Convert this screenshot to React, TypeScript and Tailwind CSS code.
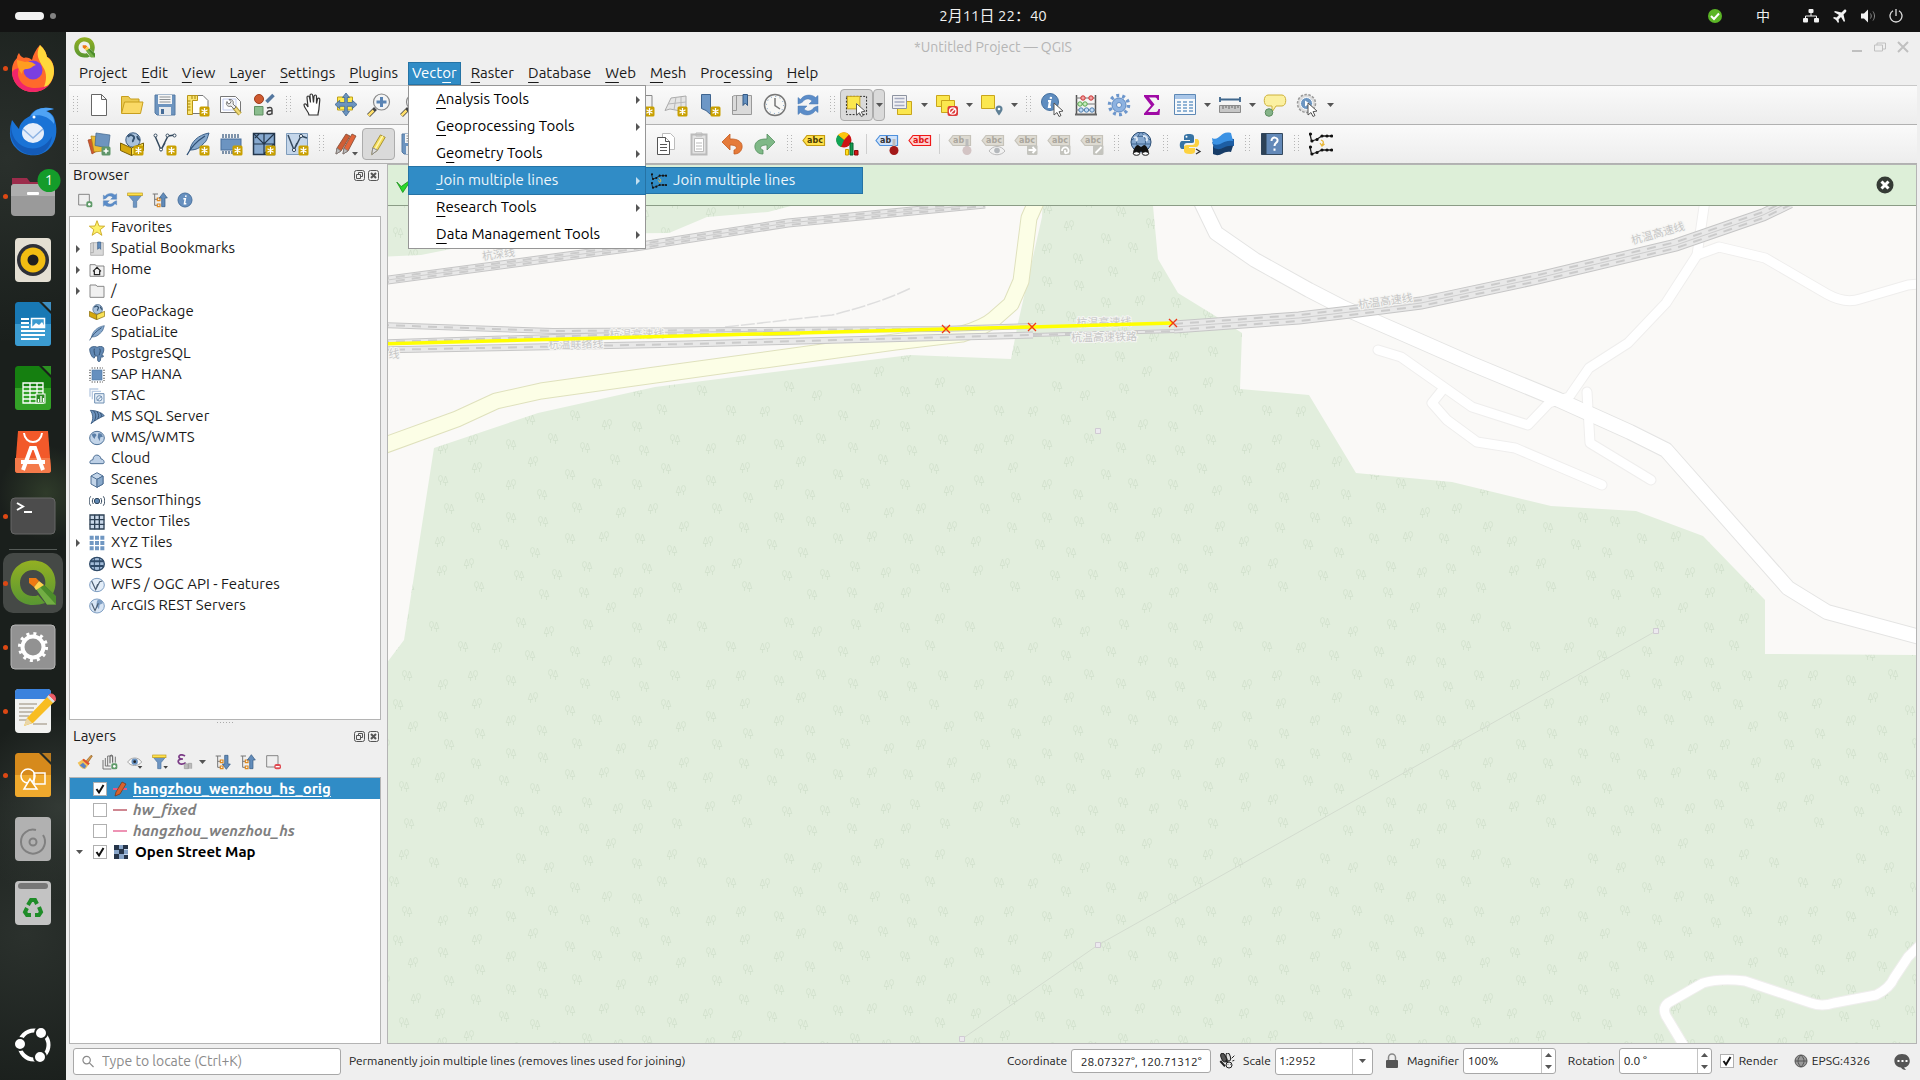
import type { ReactNode } from "react";

type IconProps = { size?: number; children: ReactNode };

function Icon({ size = 24, children }: IconProps) {
  return (
    <svg width={size} height={size} viewBox="0 0 24 24" fill="none" className="shrink-0" aria-hidden="true">
      {children}
    </svg>
  );
}

// Small yellow "new" badge shared by the creation tools.
const badge = (
  <g>
    <rect x="13.5" y="13.5" width="10" height="10" rx="1.5" fill="#c9a000" />
    <path d="M18.5 15v7M15.5 16.8l6 3.4M21.5 16.8l-6 3.4" stroke="#fff" strokeWidth="1.3" />
  </g>
);
const cursor = <path d="M12 10v12l3-2.5 2 4 2-1-2-3.8 4-.7z" fill="#fff" stroke="#555" strokeWidth="1" />;

const icons = {
  page: <path d="M4.5 1.5h10l5 5v16h-15zM14.5 1.5v5h5" fill="#fff" stroke="#666" />,
  folder: (
    <g stroke="#c79f1e">
      <path d="M1.5 20V3.5h7l2 2.5h8.5v4" fill="#eccb52" />
      <path d="M1.5 20.5l3-11.5h18.5l-2.5 11.5z" fill="#fad966" />
    </g>
  ),
  save: (
    <g>
      <path d="M2 2h20v20H4l-2-2z" fill="#6d94bf" stroke="#567aa3" />
      <rect x="5" y="2" width="14" height="9" fill="#f5f5f5" />
      <path d="M6.5 4h11M6.5 6.5h11M6.5 9h11" stroke="#8b9094" />
      <rect x="6" y="14" width="12" height="8" fill="#e6e9ec" />
      <rect x="8" y="16" width="3" height="5" fill="#456c98" />
    </g>
  ),
  layout: (
    <g>
      <path d="M6 2.5h11l5 5v13H6z" fill="#fff" stroke="#777" />
      <path d="M1.5 2.5h10v5h-5v14h-5z" fill="#fae470" stroke="#b89518" />
      <path d="M1.5 8h3M1.5 11h3M1.5 14h3M1.5 17h3M6 3v3M9 3v3" stroke="#a5840c" />
      {badge}
    </g>
  ),
  layoutManager: (
    <g>
      <path d="M1.5 3.5h15l5 5v11h-20z" fill="#fff" stroke="#777" />
      <path d="M4 6h13v11H4z" fill="#fdfdff" stroke="#c3cdf0" />
      <path d="M15 14l6 7" stroke="#b09a3c" strokeWidth="4.5" />
      <path d="M15 14l6 7" stroke="#f1da78" strokeWidth="2.5" />
      <path d="M8 8.5c-2 3 1 6 4 4.5l3 3 2-2-3-3c1-3-1-5-4-4.5l2 2-1 2-2 .3z" fill="#eee" stroke="#777" />
    </g>
  ),
  styles: (
    <g>
      <circle cx="7" cy="6" r="4.5" fill="#cf5a30" stroke="#9e3d1b" />
      <path d="M14.5 9l7-7" stroke="#54779f" strokeWidth="3.5" />
      <path d="M2.5 13.5h8.5v8.5H2.5z" fill="#8bbd8e" stroke="#5e8f61" />
      <path d="M15 15c4-1.5 5 0 5 2v4.5M20 17.5c-6 0-6 4-3 4 2 0 3-1 3-2" stroke="#444" strokeWidth="1.5" />
    </g>
  ),
  hand: (
    <path
      d="M8 22c0-3-5-7-5-10 0-1.5 2-1.5 3 .5l1 1.5L6 4.5c0-2 2-2 2.5 0l1 5-.5-7c0-2 2.5-2 2.7 0l.8 7 .5-6c.3-2 2.5-2 2.5 0v7l1-4.5c.5-1.5 2.5-1 2.3 1L18 15c0 3-1 4-1 7z"
      fill="#fff"
      stroke="#333"
      strokeWidth="1.2"
    />
  ),
  pan: (
    <g>
      <path d="M3.5 4h15v13h-15z" fill="#ffe94e" stroke="#bfa11c" />
      <path
        d="M12 0l3.5 4.5h-2.2v5h5V7.3L23 11.5l-4.7 4.2v-2.4h-5v5h2.2L12 23l-3.5-4.7h2.2v-5h-5v2.4L1 11.5l4.7-4.2v2.2h5v-5H8.5z"
        fill="#6b94c0"
        stroke="#3f6690"
        strokeWidth=".8"
      />
    </g>
  ),
  zoomIn: (
    <g>
      <path d="M8.5 15.5l-7 7" stroke="#444" strokeWidth="4" />
      <path d="M6.5 17.5l-5 5" stroke="#ffdf6b" strokeWidth="2.5" />
      <circle cx="14.5" cy="9" r="8" fill="#f3f4f5" stroke="#888" strokeWidth="1.2" />
      <path d="M14.5 4v10M9.5 9h10" stroke="#5a84b4" strokeWidth="3" />
    </g>
  ),
  zoomOut: (
    <g>
      <path d="M8.5 15.5l-7 7" stroke="#444" strokeWidth="4" />
      <path d="M6.5 17.5l-5 5" stroke="#ffdf6b" strokeWidth="2.5" />
      <circle cx="14.5" cy="9" r="8" fill="#f3f4f5" stroke="#888" strokeWidth="1.2" />
      <path d="M9.5 9h10" stroke="#5a84b4" strokeWidth="3" />
    </g>
  ),
  newView: (
    <g>
      <path d="M2 2.5h19v17H2z" fill="#f2f2f2" stroke="#888" />
      {badge}
    </g>
  ),
  mesh: (
    <g>
      <path d="M1 17.5L7 5l15-2v13l-8 1.5-8-1.5z" fill="#e5e5e5" stroke="#aaa" />
      <path d="M4 11l9-1 9-1M12 4l-2 13M17 4v12" stroke="#b8b8b8" />
      {badge}
    </g>
  ),
  newBookmark: (
    <g>
      <path d="M4.5 1.5h9v20l-4.5-4-4.5-2z" fill="#6d97c6" stroke="#3e648f" />
      {badge}
    </g>
  ),
  bookmarks: (
    <g>
      <path d="M2.5 3v18.5h19V2.5h-16c-2 0-3 .5-3 2" fill="#dadada" stroke="#999" />
      <path d="M6.5 2.5v15h-4" stroke="#999" />
      <path d="M13 1.5h4.5v11l-2.2-2.5-2.3 2.5z" fill="#638fbf" stroke="#345a86" />
    </g>
  ),
  clock: (
    <g>
      <circle cx="12" cy="12" r="10.5" fill="#f8f8f6" stroke="#777" strokeWidth="1.5" />
      <path d="M12 5v7.5l5 3.5" stroke="#777" strokeWidth="1.5" />
      <circle cx="12" cy="12" r="8.5" stroke="#6b94c0" strokeDasharray="1 3.45" />
    </g>
  ),
  refresh: (
    <g fill="#5b8cc8" stroke="#4a78b0" strokeWidth=".5">
      <path d="M2 11V4.5l2.5 2C8 1 16 1 19.5 4.5L22 2.5v8.5h-9l3-3c-3-3-7-2.5-9 .5-.8 1-3 2-5 2.5z" />
      <path d="M22 13v6.5l-2.5-2C16 23 8 23 4.5 19.5L2 21.5V13h9l-3 3c3 3 7 2.5 9-.5.8-1 3-2 5-2.5z" />
    </g>
  ),
  select: (
    <g>
      <path d="M1.5 2.5h21v19h-21z" stroke="#222" strokeDasharray="2 1.5" />
      <path d="M2.5 2.5h13v13h-13z" fill="#fbe74e" stroke="#c9a51b" />
      {cursor}
    </g>
  ),
  selectForm: (
    <g>
      <path d="M7.5 8.5h14v13h-14z" fill="#fbe74e" stroke="#c9a51b" />
      <path d="M2.5 2.5h14v13h-14z" fill="#f1f1f4" stroke="#8d93a0" />
      <path d="M4.5 5.5h10M4.5 9h10M4.5 12.5h10" stroke="#a5abc0" strokeWidth="1.5" />
    </g>
  ),
  deselect: (
    <g>
      <path d="M1.5 2.5h13v11h-13z" fill="#fbe74e" stroke="#c9a51b" />
      <path d="M6.5 7.5h13v12h-13z" fill="#fbe74e" stroke="#c9a51b" />
      <rect x="12.5" y="13" width="10.5" height="10" rx="2" fill="#dd3b3b" />
      <circle cx="17.7" cy="18" r="3.2" stroke="#fff" strokeWidth="1.3" />
      <path d="M15.5 20.2l4.5-4.5" stroke="#fff" strokeWidth="1.3" />
    </g>
  ),
  selectLocation: (
    <g>
      <path d="M1.5 2.5h13v13h-13z" fill="#fbe74e" stroke="#c9a51b" />
      <path d="M19 22.5c-3-4-3.5-5-3.5-6.5a3.5 3.5 0 017 0c0 1.5-.5 2.5-3.5 6.5z" fill="#5f8096" />
      <circle cx="19" cy="16" r="1.3" fill="#fff" />
    </g>
  ),
  identify: (
    <g>
      <circle cx="9" cy="9" r="8.5" fill="#5f8dc0" stroke="#44709f" />
      <path d="M10 3.8l-.3 2M7 8h2l-1 6h2" stroke="#fff" strokeWidth="2.2" />
      <g transform="translate(1 0)">{cursor}</g>
    </g>
  ),
  abacus: (
    <g>
      <path d="M2.5 22V2M21.5 22V2" stroke="#555" strokeWidth="1.5" />
      <path d="M2 5h20M2 11h20M2 17h20" stroke="#777" />
      <path d="M1 21.5h22" stroke="#666" strokeWidth="2" />
      <circle cx="9" cy="5" r="2.2" fill="#f3a0a0" stroke="#c33" />
      <circle cx="17" cy="5" r="2.2" fill="#f3a0a0" stroke="#c33" />
      <circle cx="6" cy="11" r="2.2" fill="#c6efbe" stroke="#5ca650" />
      <circle cx="11" cy="11" r="2.2" fill="#c6efbe" stroke="#5ca650" />
      <circle cx="7" cy="17" r="2.2" fill="#c0daf5" stroke="#5080b0" />
      <circle cx="12.5" cy="17" r="2.2" fill="#c0daf5" stroke="#5080b0" />
      <circle cx="18" cy="17" r="2.2" fill="#c0daf5" stroke="#5080b0" />
    </g>
  ),
  gear: (
    <g>
      <circle cx="12" cy="12" r="9.5" stroke="#6c96cc" strokeWidth="3.5" strokeDasharray="2.9 3.07" />
      <circle cx="12" cy="12" r="7" fill="#8db2e0" stroke="#5f8cc5" />
      <circle cx="12" cy="12" r="2.5" fill="#f4f4f4" stroke="#5f8cc5" />
    </g>
  ),
  sigma: <path d="M4 2h15v5h-1.5c-.5-2-1.5-2.5-3.5-2.500H9l5.5 7L8 19h7c2 0 3-.5 3.500-3H20l-.5 6H4v-1.500l7-8L4 3.500z" fill="#9f0aa5" />,
  table: (
    <g>
      <path d="M1.5 1.5h21v20h-21z" fill="#f7f9fb" stroke="#5d88b5" />
      <path d="M2 2h20v4H2z" fill="#a9c6e8" />
      <path d="M4 9h4M4 12h4M4 15h4M4 18h4M10 9h4M10 12h4M10 15h4M10 18h4M16 9h4M16 12h4M16 15h4M16 18h4" stroke="#6f9cc9" strokeWidth="1.5" />
    </g>
  ),
  ruler: (
    <g>
      <path d="M2 6.5h20M2 4v5M22 4v5" stroke="#3f678d" strokeWidth="1.8" />
      <path d="M1.5 12.5h21v7h-21z" fill="#c6c6c6" stroke="#8a8a8a" />
      <path d="M5 13v3M8 13v2M11 13v3M14 13v2M17 13v3M20 13v2" stroke="#666" />
    </g>
  ),
  tip: (
    <g>
      <path d="M5 2h14c5 0 5 11 0 11h-6l-4 6v-6H5c-5 0-5-11 0-11z" fill="#fbf0a0" stroke="#cdb13a" />
      <circle cx="6" cy="19.5" r="3.8" fill="#85b388" stroke="#5c8c60" />
    </g>
  ),
  actionRun: (
    <g>
      <circle cx="10.5" cy="10.5" r="9" fill="#dcdcdc" stroke="#999" strokeWidth="1.5" strokeDasharray="2.5 1.5" />
      <circle cx="10.5" cy="10.5" r="6" fill="#6c96c2" stroke="#fff" />
      <path d="M9 7.5l4.5 3-4.5 3z" fill="#fff" />
      {cursor}
    </g>
  ),
  dataSource: (
    <g>
      <path d="M1 8l9-2 3 11-8 5z" fill="#cf5a30" stroke="#9e3d1b" strokeWidth=".7" />
      <path d="M4 4l12 1v14l-9 1z" fill="#edbd35" stroke="#a98014" strokeWidth=".7" />
      <path d="M9 1l14 2-1.5 13L8 13.5z" fill="#6d94bf" stroke="#41658d" strokeWidth=".7" />
      <rect x="14.5" y="14.5" width="9" height="9" rx="1.5" fill="#60966a" />
      <path d="M19 16.5v5M16.5 19h5" stroke="#fff" strokeWidth="1.6" />
    </g>
  ),
  geopackage: (
    <g>
      <circle cx="13" cy="8" r="7.2" fill="#a8c1db" stroke="#3c5d82" />
      <path d="M8 5c2-3 5-2 6 0s-2 3-1 5M17 4c1 2 1 4 3 4" stroke="#34516f" strokeWidth="2" />
      <path d="M.5 11l11 5v7.500l-11-5z" fill="#d5a80d" stroke="#7b6006" />
      <path d="M11.5 16l12-5v7.500l-12 5z" fill="#f9e257" stroke="#7b6006" />
    </g>
  ),
  shapefile: (
    <g stroke="#34495e" strokeWidth="1.5">
      <path d="M2 4l6 14 7-14 7-1M8 18l4-7" />
      <circle cx="2.5" cy="3.5" r="1.5" fill="#fff" strokeWidth="1" />
      <circle cx="8" cy="17.5" r="1.5" fill="#fff" strokeWidth="1" />
      <circle cx="14.5" cy="3.5" r="1.5" fill="#fff" strokeWidth="1" />
      <circle cx="21.5" cy="3.5" r="1.5" fill="#fff" strokeWidth="1" />
    </g>
  ),
  feather: (
    <g>
      <path d="M4 18C5 10 12 3 23 1c-2 6-2 8-6 11-3 4-7 6-13 6z" fill="#86a8cc" stroke="#3b5f88" />
      <path d="M1 23C5 15 11 9 19 4" stroke="#2e4f75" strokeWidth="1.3" />
    </g>
  ),
  chip: (
    <g>
      <rect x="2" y="7" width="20" height="11" fill="#6c94c1" stroke="#486f9b" />
      <path d="M4 6V2M7 6V2M10 6V2M13 6V2M16 6V2M19 6V2M4 22v-3M7 22v-3M10 22v-3M13 22v-3" stroke="#3f5f82" strokeWidth="1.3" />
    </g>
  ),
  virtualLayer: (
    <g>
      <path d="M1.5 1.5h21v21h-21z" fill="#87a9cf" stroke="#23364b" strokeWidth="1.5" />
      <path d="M12 1.5v21M1.5 12h21M1.5 1.5L12 12l10-10M3 6l4-4M12 22l10-10" stroke="#23364b" strokeWidth="1.2" />
    </g>
  ),
  meshLayer: (
    <g>
      <path d="M1.5 1.5h21v21h-21z" fill="#c4d6ea" stroke="#7f9cbb" />
      <path d="M3 3l6 15 7-14 6 2M9 18l3-7" stroke="#34495e" strokeWidth="1.5" />
      <circle cx="9" cy="18" r="1.6" fill="#fff" stroke="#34495e" />
      <circle cx="16" cy="4" r="1.6" fill="#fff" stroke="#34495e" />
    </g>
  ),
  pencils: (
    <g>
      <path d="M2 22l1-6L12 2l4 2-9 15z" fill="#cf5d35" stroke="#7d4a34" strokeWidth=".8" />
      <path d="M9 22l1-6 8-14 4 2-8 15z" fill="#e2653a" stroke="#7d4a34" strokeWidth=".8" />
      <path d="M2 22l1-6 4 3zM9 22l1-6 4 3z" fill="#bbb" stroke="#777" strokeWidth=".8" />
      <path d="M18 20h6l-3 3.5z" fill="#555" />
    </g>
  ),
  pencil: (
    <g>
      <path d="M5 22.5l1-7L14 2l5 2.5L11 18z" fill="#f4dd5a" stroke="#a48f35" />
      <path d="M8.5 16.5l8-13.5" stroke="#fff6b5" strokeWidth="1.5" />
      <path d="M5 22.5l1-7 5 2.5z" fill="#ddd" stroke="#888" />
    </g>
  ),
  copy: (
    <g fill="#fff" stroke="#777">
      <path d="M8.5 1.5h8l4 4v12h-12z" stroke="#bbb" />
      <path d="M3.5 5.5h8l4 4v13h-12z" stroke="#555" />
      <path d="M11.5 5.5v4h4M6 12.5h7M6 15.5h7M6 18.5h7" stroke="#555" />
    </g>
  ),
  paste: (
    <g stroke="#bbb">
      <path d="M4.5 2.5h15v20h-15z" fill="#e3e3e3" strokeWidth="2" />
      <path d="M7.5 6.5h9v13h-9z" fill="#fff" />
      <path d="M9 1h6v3H9zM9 11h6M9 14h6M9 17h6" />
    </g>
  ),
  undo: <path d="M2 10l8-8v5c9-.5 13 4 12 9-1 4-4 6-8 6v-4c3-.5 4.500-5-4-5v5z" fill="#e57b3a" stroke="#c45c20" strokeWidth=".8" />,
  redo: <path d="M22 10l-8-8v5C5 6.5 1 11 2 16c1 4 4 6 8 6v-4c-3-.5-4.500-5 4-5v5z" fill="#7fb887" stroke="#579060" strokeWidth=".8" />,
  diagrams: (
    <g>
      <circle cx="9" cy="8" r="7.5" fill="#cc1414" />
      <path d="M9 8L3 3a7.500 7.500 0 0111-.5z" fill="#fbc70b" />
      <path d="M9 8L3 3a7.500 7.500 0 003 12z" fill="#10a555" />
      <path d="M10.5 17.5h3V23h-3z" fill="#ffe01b" stroke="#c99c00" />
      <path d="M15 11h3v12h-3z" fill="#119b50" stroke="#07632f" />
      <path d="M19.5 18.5h3.5V23h-3.5z" fill="#d21414" stroke="#8a0808" />
    </g>
  ),
  metasearch: (
    <g>
      <circle cx="12" cy="10" r="10" fill="#86a8cf" stroke="#28496f" />
      <path d="M3 8c5-5 13-5 18 0M2 12h20M12 0c-6 6-6 14 0 20M12 0c6 6 6 14 0 20" stroke="#3f658f" />
      <path d="M5 6c3-2 4 1 2 3M14 4c4 0 5 3 3 5" stroke="#dce8f5" strokeWidth="2" />
      <path d="M4 22c0-5 3-9 5-9l3 2 3-2c2 0 5 4 5 9h-6l-2-3-2 3z" fill="#111" />
      <ellipse cx="7.500" cy="21.500" rx="3.200" ry="1.800" fill="#fff" stroke="#111" />
      <ellipse cx="16.500" cy="21.500" rx="3.200" ry="1.800" fill="#fff" stroke="#111" />
    </g>
  ),
  python: (
    <g>
      <path d="M11 2c-4 0-5 1-5 3v3h6v1H4c-3 0-3 8 0 8h2v-3c0-2 1-3 3-3h5c2 0 2-1 2-2V5c0-2-1-3-5-3z" fill="#3773a5" />
      <path d="M12 22c4 0 5-1 5-3v-3h-6v-1h7c4 0 4-8 1-8h-2v3c0 2-1 3-3 3H9c-2 0-3 1-3 2v4c0 2 2 3 6 3z" fill="#fdd240" />
      <circle cx="8.5" cy="4.8" r="1" fill="#fff" />
      <path d="M18 17l4 2.5-4 2.5" stroke="#333" strokeWidth="1.3" />
    </g>
  ),
  waves: (
    <g>
      <path d="M2 14c7 3 9-6 21-3l-3 9c-8-2-10 6-18 2z" fill="#173c67" />
      <path d="M1 10c8 4 10-6 22-3v7c-10-2-12 6-20 2z" fill="#1d5ea4" />
      <path d="M1 6c8 4 8-8 19-5l2 8c-10-2-12 6-20 3z" fill="#3b92e4" />
    </g>
  ),
  help: (
    <g>
      <path d="M1.5 1.5h21v21h-21z" fill="#6389b8" stroke="#34495e" />
      <path d="M1.5 1.5h5v21h-5z" fill="#2d4257" />
      <path d="M11.5 9c0-5 7-4 6 0-.5 2-3 2-3 5M14.5 16.5v2.200" stroke="#fff" strokeWidth="2" />
    </g>
  ),
  join: (
    <g>
      <g stroke="#222" strokeWidth="1.3">
        <path d="M1 2l1.5 7 5-1.5L13 4h10" />
        <path d="M1 15l1.5 7 5-1.500L13 18h10" />
      </g>
      <g fill="#111">
        <circle cx="1.5" cy="2" r="1.6" /><circle cx="3" cy="9" r="1.6" /><circle cx="8" cy="7.5" r="1.6" />
        <circle cx="13" cy="4" r="1.6" /><circle cx="18" cy="4" r="1.6" /><circle cx="22.5" cy="4" r="1.6" />
        <circle cx="1.5" cy="15" r="1.6" /><circle cx="3" cy="22" r="1.6" /><circle cx="8" cy="20.5" r="1.6" />
        <circle cx="13" cy="18" r="1.6" /><circle cx="18" cy="18" r="1.6" /><circle cx="22.5" cy="18" r="1.6" />
      </g>
      <path d="M12 8c3 1 3 3 1 5M11 11l2 3 2.5-2" stroke="#e8b73a" strokeWidth="1.3" />
    </g>
  ),
  star: <path d="M12 1l3 8 8.5.3-6.7 5.200 2.500 8.500-7.300-5-7.300 5 2.500-8.500L.5 9.300 9 9z" fill="#fdf06a" stroke="#c9a51b" strokeWidth="1.3" />,
  home: (
    <g>
      <path d="M1.5 21.5V4h8l1.5 2h11.5v15.500z" fill="#f1f1f1" stroke="#777" strokeWidth="1.3" />
      <path d="M6 14l6-6 6 6M8 13v6h8v-6" stroke="#222" strokeWidth="1.8" />
    </g>
  ),
  dir: <path d="M1.5 21.5V3h9l1.5 2h10.500v16.500z" fill="#f0f0f0" stroke="#888" strokeWidth="1.5" />,
  elephant: (
    <g>
      <path d="M3 2c4-2 8-1 9 0 3-2 9-2 10 1 1 4-1 8-3 11l3 1c-1 2-3 2-4 1l-1 6c-1 2-4 2-4-1v-6H9l-1 3C4 18 1 9 1 5c0-1 1-2 2-3z" fill="#6289b4" stroke="#3c5d82" strokeWidth="1.3" />
      <path d="M8 4c-1 3 0 7 1 10M16 4c2 3 0 7-1 10" stroke="#334f6e" strokeWidth="1.5" />
    </g>
  ),
  hana: (
    <g>
      <rect x="4.5" y="4.5" width="15" height="15" fill="#6690bf" stroke="#5079a6" />
      <path d="M4 1.500h17M4 22.500h17M1.500 4v17M22.500 4v17" stroke="#222" strokeWidth="1.800" strokeDasharray="1.500 2.500" />
    </g>
  ),
  stac: (
    <g>
      <path d="M1.5 13V1.5H14M5 17V5h13" stroke="#b9cbe2" strokeWidth="2" />
      <path d="M8.5 8.5h14v14h-14z" fill="#e8f0f8" stroke="#6f8fb2" strokeWidth="1.5" />
      <circle cx="15.5" cy="15.5" r="4" stroke="#6f8fb2" strokeWidth="1.5" />
      <path d="M12 19l7-7" stroke="#6f8fb2" strokeWidth="1.5" />
    </g>
  ),
  mssql: (
    <g>
      <path d="M2 2c8 0 17 3 21 8-6 3-13 6-20 12 4-7 3-14-1-20z" fill="#6b91bc" stroke="#3c5d82" strokeWidth="1.3" />
      <path d="M7 3c4 5 4 9 1 15M12 4c3 4 3 7 1 11M17 6c2 3 2 4 1 6" stroke="#2d4866" strokeWidth="1.3" />
    </g>
  ),
  globe: (
    <g>
      <ellipse cx="12" cy="12" rx="11" ry="10" fill="#c3d5e9" stroke="#4e7197" strokeWidth="1.5" />
      <path d="M4 7c3-3 6-2 7 0s-3 3-2 7l-3-3zM14 5c4-1 6 2 7 5l-4 1-1 6-3-6z" fill="#5a7fa8" />
    </g>
  ),
  cloud: <path d="M3 19c-3 0-2-6 3-6 0-9 11-9 12-1 5 0 6 7 3 7z" fill="#bdd0e6" stroke="#4e6f94" strokeWidth="1.5" />,
  cube: (
    <g fill="#c3d5e9" stroke="#4e6f94" strokeWidth="1.5">
      <path d="M3 6l9-5 9 5v12l-9 5-9-5z" />
      <path d="M3 6l9 5 9-5M12 11v12" fill="none" />
      <path d="M12 11l9-5v12l-9 5z" fill="#89a9cb" />
    </g>
  ),
  sensor: (
    <g stroke="#34495e" strokeWidth="1.5">
      <circle cx="12" cy="12" r="4" fill="#5d86b2" />
      <path d="M6.5 7.5c-2 3-2 6 0 9M17.5 7.5c2 3 2 6 0 9M2.500 5c-3 4-3 10 0 14M21.500 5c3 4 3 10 0 14" />
    </g>
  ),
  vectorTiles: (
    <g>
      <path d="M1.5 1.5h21v21h-21z" fill="#c9d7e8" stroke="#2d4054" strokeWidth="2" />
      <path d="M8.5 1v22M15.5 1v22M1 8.5h22M1 15.5h22" stroke="#2d4054" strokeWidth="2" />
    </g>
  ),
  xyz: (
    <path
      d="M1 1h6v6H1zM9 1h6v6H9zM17 1h6v6h-6zM1 9h6v6H1zM9 9h6v6H9zM17 9h6v6h-6zM1 17h6v6H1zM9 17h6v6H9zM17 17h6v6h-6z"
      fill="#7097c2"
    />
  ),
  wcs: (
    <g>
      <ellipse cx="12" cy="12" rx="11" ry="10" fill="#a3bcd9" stroke="#2f4a68" strokeWidth="2" />
      <path d="M2 8h20M2 15h20" stroke="#2f4a68" strokeWidth="3" />
      <path d="M8 3v18M16 3v18" stroke="#2f4a68" strokeWidth="1.5" />
    </g>
  ),
  wfs: (
    <g>
      <ellipse cx="12" cy="12" rx="11" ry="10" fill="#e3edf8" stroke="#7d9dc2" strokeWidth="1.5" />
      <path d="M4 6l6 13 6-12 4-1M10 19l3-8" stroke="#4c5e72" strokeWidth="1.8" />
    </g>
  ),
  arcgis: (
    <g>
      <ellipse cx="12" cy="12" rx="11" ry="10.5" fill="#d8e5f4" stroke="#7d9dc2" strokeWidth="1.5" />
      <path d="M12 4c4-3 8 0 9 4l-5 2-1 7-4-5z" fill="#7d9dc2" />
      <path d="M4 8l5 11 5-11" stroke="#4c5e72" strokeWidth="1.8" />
    </g>
  ),
  addSelected: (
    <g>
      <path d="M2.5 3.5h16v16h-16z" stroke="#777" strokeWidth="1.3" />
      <rect x="14" y="14" width="9" height="9" rx="2.5" fill="#5f9b69" />
      <circle cx="18.5" cy="18.5" r="2" fill="#fff" />
    </g>
  ),
  filter: (
    <g>
      <path d="M2 5h20l-7.5 9v9h-5v-9z" fill="#6e96c3" stroke="#4b73a0" />
      <rect x="1" y="1.5" width="22" height="4" fill="#ffe14c" stroke="#bd9a1c" />
    </g>
  ),
  collapse: (
    <g>
      <path d="M1 3h8M4 3v17h4M4 11h4" stroke="#777" strokeWidth="1.5" />
      <path d="M8 9h4v4H8zM8 18h4v4H8z" stroke="#e08a1e" strokeWidth="1.8" />
      <path d="M17 1l6 8h-3.5v13h-5V9H11z" fill="#628cbb" stroke="#34587f" />
    </g>
  ),
  expand: (
    <g>
      <path d="M1 3h8M4 3v17h4M4 11h4" stroke="#777" strokeWidth="1.5" />
      <path d="M8 9h4v4H8zM8 18h4v4H8z" stroke="#e08a1e" strokeWidth="1.8" />
      <path d="M17 23l6-8h-3.5V2h-5v13H11z" fill="#628cbb" stroke="#34587f" />
    </g>
  ),
  info: (
    <g>
      <circle cx="12" cy="12" r="10.5" fill="#6790bf" stroke="#4a729f" strokeWidth="1.5" />
      <path d="M13.5 5l-.5 2.5M9.5 10h3l-1.3 7.5H14" stroke="#fff" strokeWidth="2.3" />
    </g>
  ),
  brush: (
    <g>
      <path d="M14 10l7-8 2 1-6 9z" fill="#dc9a47" stroke="#8a5c20" />
      <path d="M1 13l9-6 9 7-6 8c-2 1-3-1-5 0-1-2-3-1-4-4z" fill="#f2c259" />
      <path d="M10 7l9 7-2 3-9-8z" fill="#dd4f34" />
      <path d="M4 17l5-4 5 5-3 4z" fill="#5b83c4" />
    </g>
  ),
  group: (
    <g>
      <path d="M1.5 9v13.5H14M5 6v12M8.5 3v15M8.5 3h8M20 4v9M5 18h8" stroke="#777" strokeWidth="1.5" />
      <path d="M12 14V4c0-3 4-3 4 0v9" stroke="#555" strokeWidth="1.5" />
      <rect x="14" y="14" width="9" height="9" rx="2.5" fill="#5f9b69" />
      <circle cx="18.5" cy="18.5" r="2" fill="#fff" />
    </g>
  ),
  eye: (
    <g>
      <path d="M1 12c5-8 16-8 21 0-5 7-16 7-21 0z" fill="#fafafa" stroke="#999" strokeWidth="1.3" />
      <circle cx="11.5" cy="11.5" r="4.8" fill="#6790bf" />
      <circle cx="11.5" cy="11.5" r="2" fill="#222" />
      <path d="M16 18h7l-3.5 4z" fill="#444" />
    </g>
  ),
  filterMenu: (
    <g>
      <path d="M2 5h18l-6.5 8v9h-5v-9z" fill="#6e96c3" stroke="#4b73a0" />
      <rect x="1" y="1.5" width="20" height="4" fill="#ffe14c" stroke="#bd9a1c" />
      <path d="M17 18h7l-3.5 4z" fill="#444" />
    </g>
  ),
  epsilon: (
    <g>
      <path d="M12 3C8 0 2 1 3 5c.5 2 3 2.500 6 2.500C4 7.500 1 9 2 12c1 4 7 4 11 1" stroke="#7a3b86" strokeWidth="2.5" />
      <path d="M11 22v-6c0-2 6-2 6 0v6zM17 22v-8h5v8" fill="#bbb" stroke="#999" />
    </g>
  ),
  removeLayer: (
    <g>
      <path d="M2.5 2.5h17v17h-17z" stroke="#777" strokeWidth="1.3" />
      <rect x="14" y="15" width="10" height="8" rx="3" fill="#df4b52" />
      <path d="M16 19h6" stroke="#fff" strokeWidth="2" />
    </g>
  ),
};

type Glyph = keyof typeof icons;

// Label tag; the text inside is real svg text.
function TagIcon({ tone, text = "abc", extra }: { tone: "yellow" | "red" | "blue" | "gray"; text?: string; extra?: ReactNode }) {
  const colors = {
    yellow: ["#ffe14c", "#c39b12", "#4a3b00"],
    red: ["#ffd0d0", "#f01818", "#e01010"],
    blue: ["#cfe2fa", "#4e90dc", "#333"],
    gray: ["#dedbd2", "#c6c3ba", "#aaa69d"],
  }[tone];
  return (
    <svg width="24" height="24" viewBox="0 0 24 24" fill="none" aria-hidden="true">
      <path d="M1 8.5L5 3.5h17.5v10H5z" fill={colors[0]} stroke={colors[1]} strokeWidth="1.2" />
      <text x="5" y="11" fontSize="8" fontWeight="bold" fill={colors[2]} className="font-['DejaVu_Sans']">
        {text}
      </text>
      {extra}
    </svg>
  );
}

const pin = (color: string) => (
  <g>
    <path d="M19 7v9" stroke="#bbb" strokeWidth="3" />
    <circle cx="19" cy="18.5" r="4.5" fill={color} />
  </g>
);
const grayBox = (d: string) => (
  <g>
    <rect x="13" y="13" width="10.5" height="10" rx="1.5" fill="#c4c4be" />
    <path d={d} stroke="#fff" strokeWidth="1.8" />
  </g>
);

type Tool = { label: string; icon?: Glyph; node?: ReactNode; badge?: boolean; arrow?: boolean; checked?: boolean; disabled?: boolean } | "grip" | "line" | "gap";

const mainTools: Tool[] = [
  { label: "New Project", icon: "page" },
  { label: "Open Project", icon: "folder" },
  { label: "Save Project", icon: "save" },
  { label: "New Print Layout", icon: "layout" },
  { label: "Layout Manager", icon: "layoutManager" },
  { label: "Style Manager", icon: "styles" },
  "grip",
  { label: "Pan Map", icon: "hand" },
  { label: "Pan Map to Selection", icon: "pan" },
  { label: "Zoom In", icon: "zoomIn" },
  { label: "Zoom Out", icon: "zoomOut" },
  { label: "Zoom Full", icon: "zoomIn" },
  { label: "Zoom to Selection", icon: "zoomIn" },
  { label: "Zoom to Layer", icon: "zoomIn" },
  { label: "Zoom to Native Resolution", icon: "zoomIn" },
  { label: "Zoom Last", icon: "zoomOut" },
  { label: "Zoom Next", icon: "zoomOut" },
  { label: "New Map View", icon: "newView" },
  { label: "New 3D Map View", icon: "mesh" },
  { label: "New Spatial Bookmark", icon: "newBookmark" },
  { label: "Show Spatial Bookmarks", icon: "bookmarks" },
  { label: "Temporal Controller", icon: "clock" },
  { label: "Refresh", icon: "refresh" },
  "grip",
  { label: "Select Features", icon: "select", arrow: true, checked: true },
  { label: "Select by Value", icon: "selectForm", arrow: true },
  { label: "Deselect Features", icon: "deselect", arrow: true },
  { label: "Select by Location", icon: "selectLocation", arrow: true },
  "grip",
  { label: "Identify Features", icon: "identify" },
  { label: "Field Calculator", icon: "abacus" },
  { label: "Processing Toolbox", icon: "gear" },
  { label: "Statistical Summary", icon: "sigma" },
  { label: "Attribute Table", icon: "table", arrow: true },
  { label: "Measure Line", icon: "ruler", arrow: true },
  { label: "Map Tips", icon: "tip" },
  { label: "Run Feature Action", icon: "actionRun", arrow: true },
];

const editTools: Tool[] = [
  { label: "Data Source Manager", icon: "dataSource" },
  { label: "New GeoPackage Layer", icon: "geopackage", badge: true },
  { label: "New Shapefile Layer", icon: "shapefile", badge: true },
  { label: "New SpatiaLite Layer", icon: "feather", badge: true },
  { label: "New Scratch Layer", icon: "chip", badge: true },
  { label: "New Virtual Layer", icon: "virtualLayer", badge: true },
  { label: "New Mesh Layer", icon: "meshLayer", badge: true },
  "grip",
  { label: "Current Edits", icon: "pencils" },
  { label: "Toggle Editing", icon: "pencil", checked: true },
  { label: "Save Layer Edits", icon: "save", disabled: true },
  { label: "Add Line Feature", icon: "shapefile" },
  { label: "Vertex Tool", icon: "join" },
  { label: "Modify Attributes", icon: "table" },
  { label: "Delete Selected", icon: "page" },
  { label: "Cut Features", icon: "page" },
  { label: "Move Feature", icon: "page" },
  "gap",
  { label: "Copy Features", icon: "copy" },
  { label: "Paste Features", icon: "paste" },
  { label: "Undo", icon: "undo" },
  { label: "Redo", icon: "redo" },
  "grip",
  { label: "Layer Labeling", node: <TagIcon tone="yellow" /> },
  { label: "Layer Diagrams", icon: "diagrams" },
  "line",
  { label: "Pinned Labels", node: <TagIcon tone="blue" text="ab" extra={pin("#a31818")} /> },
  { label: "Unplaced Labels", node: <TagIcon tone="red" /> },
  "line",
  { label: "Pin Labels", node: <TagIcon tone="gray" text="ab" extra={pin("#d3c4c4")} /> },
  {
    label: "Show Labels",
    node: (
      <TagIcon
        tone="gray"
        extra={
          <g>
            <path d="M8 19c4-6 12-6 16 0-4 5-12 5-16 0z" fill="#f1f1f1" stroke="#bbb" />
            <circle cx="16" cy="18.5" r="2.8" fill="#b4b8bc" />
          </g>
        }
      />
    ),
  },
  { label: "Move Label", node: <TagIcon tone="gray" extra={grayBox("M14.5 18h7M18.5 15l3 3-3 3")} /> },
  { label: "Rotate Label", node: <TagIcon tone="gray" extra={grayBox("M15 19a3.3 3.3 0 116 1.5l-3 1M18 18v3.5")} /> },
  { label: "Change Label", node: <TagIcon tone="gray" extra={grayBox("M15.5 21l6-6")} /> },
  "grip",
  { label: "MetaSearch", icon: "metasearch" },
  "grip",
  { label: "Python Console", icon: "python" },
  { label: "Wave Plugin", icon: "waves" },
  "grip",
  { label: "Help Contents", icon: "help" },
  "grip",
  { label: "Join multiple lines", icon: "join" },
];

function Toolbar({ tools, label }: { tools: Tool[]; label: string }) {
  return (
    <div role="toolbar" aria-label={label} className="flex h-[39px] items-center overflow-hidden border-b border-[#b1b1b1] bg-linear-to-b from-[#fafafa] to-[#ededed]">
      <Grip first />
      {tools.map((tool, i) => {
        if (tool === "grip") return <Grip key={i} />;
        if (tool === "line") return <span key={i} className="mx-[3px] h-5 w-px shrink-0 bg-[#cfcfcf]" />;
        if (tool === "gap") return <span key={i} className="w-[23px] shrink-0" />;
        return (
          <span key={i} className="flex shrink-0">
            <button
              type="button"
              aria-label={tool.label}
              disabled={tool.disabled}
              className={`flex h-8 w-[33px] items-center justify-center ${tool.checked ? "rounded border border-[#acacac] bg-[#dadada]" : ""}`}
            >
              {tool.node ?? (
                <Icon size={tool.checked ? 23 : 24}>
                  {icons[tool.icon!]}
                  {tool.badge && badge}
                </Icon>
              )}
            </button>
            {tool.arrow && (
              <button
                type="button"
                aria-label={`${tool.label} options`}
                className={`flex h-8 w-3 items-center justify-center ${tool.checked ? "rounded border border-[#acacac] bg-[#dadada]" : ""}`}
              >
                <DownArrow />
              </button>
            )}
          </span>
        );
      })}
    </div>
  );
}

function DownArrow() {
  return (
    <svg width="7" height="4" viewBox="0 0 7 4" className="shrink-0" aria-hidden="true">
      <path d="M0 0h7L3.5 4z" fill="#555" />
    </svg>
  );
}

function RightArrow({ color = "#555" }: { color?: string }) {
  return (
    <svg width="4" height="8" viewBox="0 0 4 8" className="shrink-0" aria-hidden="true">
      <path d="M0 0l4 4-4 4z" fill={color} />
    </svg>
  );
}

function Grip({ first }: { first?: boolean }) {
  return (
    <span className={`flex shrink-0 justify-center ${first ? "w-[13px]" : "w-4"}`}>
      <svg width="5" height="18" viewBox="0 0 5 18" aria-hidden="true">
        <path d="M.5 0v18M4.5 0v18" stroke="#b5b5b5" strokeDasharray="1 2" />
      </svg>
    </span>
  );
}

const menus: [string, number][] = [
  ["Project", 3],
  ["Edit", 0],
  ["View", 0],
  ["Layer", 0],
  ["Settings", 0],
  ["Plugins", 0],
  ["Vector", 4],
  ["Raster", 0],
  ["Database", 0],
  ["Web", 0],
  ["Mesh", 0],
  ["Processing", 3],
  ["Help", 0],
];

const vectorMenu: [string, number][] = [
  ["Analysis Tools", 0],
  ["Geoprocessing Tools", 0],
  ["Geometry Tools", 1],
  ["Join multiple lines", 0],
  ["Research Tools", 0],
  ["Data Management Tools", 0],
];

function Mnemonic({ text, at }: { text: string; at: number }) {
  return (
    <span>
      {text.slice(0, at)}
      <span className="underline underline-offset-4">{text[at]}</span>
      {text.slice(at + 1)}
    </span>
  );
}

function VectorMenu() {
  return (
    <div role="menu" className="absolute left-0 top-full z-20 w-[238px] border border-[#969696] bg-white text-black">
      {vectorMenu.map(([text, at]) => {
        const open = text === "Join multiple lines";
        return (
          <div key={text} className="relative">
            <button
              type="button"
              role="menuitem"
              className={`flex h-[27px] w-full items-center justify-between pl-[27px] pr-[5px] ${open ? "bg-[#308cc6] text-[#eef6fb] outline outline-[#2573a5]" : ""}`}
            >
              <Mnemonic text={text} at={at} />
              <RightArrow color={open ? "#c4dff0" : "#555"} />
            </button>
            {open && (
              <div role="menu" className="absolute left-full top-0 z-30 w-[218px]">
                <button type="button" role="menuitem" className="flex h-[27px] w-full items-center gap-[6px] border border-[#2573a5] bg-[#308cc6] pl-[5px] text-[#eef6fb]">
                  <Icon size={16}>{icons.join}</Icon>
                  Join multiple lines
                </button>
              </div>
            )}
          </div>
        );
      })}
    </div>
  );
}

function MenuBar() {
  return (
    <nav role="menubar" className="flex h-6 items-stretch gap-[6px] border-b border-[#c8c8c8] pl-[6px]">
      {menus.map(([text, at]) => (
        <div key={text} className="relative flex">
          <button
            type="button"
            role="menuitem"
            className={`flex items-center border px-[3px] ${text === "Vector" ? "border-[#2573a5] bg-[#308cc6] text-white" : "border-transparent"}`}
          >
            <Mnemonic text={text} at={at} />
          </button>
          {text === "Vector" && <VectorMenu />}
        </div>
      ))}
    </nav>
  );
}

function QgisLogo({ size }: { size: number }) {
  return (
    <svg width={size} height={size} viewBox="0 0 46 46" fill="none" aria-hidden="true">
      <defs>
        <linearGradient id="qgis" x1="0" y1="0" x2="0" y2="1">
          <stop offset="0" stopColor="#93b023" />
          <stop offset="1" stopColor="#589632" />
        </linearGradient>
      </defs>
      <path
        fillRule="evenodd"
        d="M23 .5c13 0 22.500 9 22.500 22 0 4-1 8-2.500 11L35 26c2-8-3-16-12-16-8 0-13 6-13 13s5 13 13 13c2 0 4 0 5-1l7 8c-3 1-8 2-12 2C10 45 .5 35 .5 22.500S10 .5 23 .5z"
        fill="url(#qgis)"
      />
      <path d="M26 29l8-4 12 11v8.500h-9z" fill="#4c8c2b" />
      <path d="M26 29l4-2 16 17.500h-9z" fill="#72ad44" />
      <path d="M19 18h7l3 3-5 6-5-4z" fill="#ee7913" />
      <path d="M24 27l5-6 5 4-8 5z" fill="#ffd34d" />
    </svg>
  );
}

const panelRows: { label: string; icon: Glyph; expandable?: boolean }[] = [
  { label: "Favorites", icon: "star" },
  { label: "Spatial Bookmarks", icon: "bookmarks", expandable: true },
  { label: "Home", icon: "home", expandable: true },
  { label: "/", icon: "dir", expandable: true },
  { label: "GeoPackage", icon: "geopackage" },
  { label: "SpatiaLite", icon: "feather" },
  { label: "PostgreSQL", icon: "elephant" },
  { label: "SAP HANA", icon: "hana" },
  { label: "STAC", icon: "stac" },
  { label: "MS SQL Server", icon: "mssql" },
  { label: "WMS/WMTS", icon: "globe" },
  { label: "Cloud", icon: "cloud" },
  { label: "Scenes", icon: "cube" },
  { label: "SensorThings", icon: "sensor" },
  { label: "Vector Tiles", icon: "vectorTiles" },
  { label: "XYZ Tiles", icon: "xyz", expandable: true },
  { label: "WCS", icon: "wcs" },
  { label: "WFS / OGC API - Features", icon: "wfs" },
  { label: "ArcGIS REST Servers", icon: "arcgis" },
];

function PanelHeader({ title }: { title: string }) {
  return (
    <div className="flex h-[22px] shrink-0 items-center justify-between pl-1 pr-[2px]">
      <h2>{title}</h2>
      <div className="flex gap-[3px]">
        <button type="button" aria-label={`Float ${title}`}>
          <svg width="11" height="11" viewBox="0 0 11 11" fill="none" stroke="#555" aria-hidden="true">
            <rect x=".5" y=".5" width="10" height="10" rx="2" />
            <path d="M2.5 4.5h4v4h-4zM4.5 4V2.5h4v4H7" />
          </svg>
        </button>
        <button type="button" aria-label={`Close ${title}`}>
          <svg width="11" height="11" viewBox="0 0 11 11" fill="none" stroke="#555" aria-hidden="true">
            <rect x=".5" y=".5" width="10" height="10" rx="2" />
            <path d="M3 3l5 5M8 3L3 8" strokeWidth="2" />
          </svg>
        </button>
      </div>
    </div>
  );
}

function CheckBox({ label, checked }: { label: string; checked?: boolean }) {
  return (
    <span className="relative flex h-[14px] w-[14px] shrink-0">
      <input type="checkbox" aria-label={label} defaultChecked={checked} className="peer h-[14px] w-[14px] appearance-none border border-[#b0b0b0] bg-white" />
      <svg viewBox="0 0 14 14" className="pointer-events-none absolute inset-0 hidden peer-checked:block" fill="none" aria-hidden="true">
        <path d="M3.5 7l2.5 3.5L10.500 3" stroke="#111" strokeWidth="2" />
      </svg>
    </span>
  );
}

const layers = [
  { name: "hangzhou_wenzhou_hs_orig", checked: true, color: "#e05a85", selected: true },
  { name: "hw_fixed", checked: false, color: "#cf8791" },
  { name: "hangzhou_wenzhou_hs", checked: false, color: "#ee93b4" },
  { name: "Open Street Map", checked: true, raster: true },
];

function LayerRow({ layer }: { layer: (typeof layers)[number] }) {
  const tone = layer.selected ? "bg-[#308cc6] text-white underline underline-offset-2" : layer.raster ? "text-black" : "italic text-[#808080]";
  return (
    <li className={`flex h-[21px] items-center pl-[6px] font-bold ${tone}`}>
      <span className="flex w-[17px]">{layer.raster && <DownArrow />}</span>
      <CheckBox label={layer.name} checked={layer.checked} />
      <span className={`mx-[6px] flex items-center ${layer.raster ? "w-4" : "w-[14px]"}`}>
        {layer.raster ? (
          <svg width="14" height="14" viewBox="0 0 14 14" className="ml-px" aria-hidden="true">
            <rect width="14" height="14" fill="#c9daf0" />
            <path d="M0 0h5v5H0zM9 0h5v4H9zM5 4h5v5H5zM0 9h5v5H0zM10 10h4v4h-4z" fill="#26354a" />
            <path d="M5 0h4v4H5zM0 5h5v4H0zM10 5h4v4h-4zM5 9h5v5H5z" fill="#87a4c8" />
          </svg>
        ) : (
          <svg width="14" height="14" viewBox="0 0 14 14" className="overflow-visible" aria-hidden="true">
            <path d="M0 7h14" stroke={layer.color} strokeWidth="2" />
            {layer.selected && <path d="M2 14l1-4 6-10 4 2-6 10z" fill="#d8612c" stroke="#7a3a1c" strokeWidth=".8" />}
          </svg>
        )}
      </span>
      {layer.name}
    </li>
  );
}

const browserTools: [string, Glyph][] = [
  ["Add Selected Layers", "addSelected"],
  ["Refresh Browser", "refresh"],
  ["Filter Browser", "filter"],
  ["Collapse All", "collapse"],
  ["Enable Properties", "info"],
];

function SidePanels() {
  return (
    <aside className="flex w-[312px] shrink-0 flex-col">
      <section className="flex min-h-0 flex-[557] flex-col">
        <PanelHeader title="Browser" />
        <div className="flex h-[30px] shrink-0 items-center gap-[9px] pb-[2px] pl-2">
          {browserTools.map(([label, icon]) => (
            <button key={label} type="button" aria-label={label}>
              <Icon size={16}>{icons[icon]}</Icon>
            </button>
          ))}
        </div>
        <ul className="min-h-0 grow overflow-hidden border border-[#b4b4b4] bg-white">
          {panelRows.map((row) => (
            <li key={row.label} className="flex h-[21px] items-center pl-[6px]">
              <span className="flex w-[13px]">{row.expandable && <RightArrow />}</span>
              <Icon size={16}>{icons[row.icon]}</Icon>
              <span className="pl-[6px]">{row.label}</span>
            </li>
          ))}
        </ul>
      </section>
      <div className="flex h-[5px] shrink-0 items-center justify-center">
        <svg width="17" height="1" aria-hidden="true">
          <path d="M0 .5h17" stroke="#aaa" strokeDasharray="1 2" />
        </svg>
      </div>
      <section className="flex min-h-0 flex-[319] flex-col">
        <PanelHeader title="Layers" />
        <div className="flex h-[30px] shrink-0 items-center gap-[9px] pl-2">
          <button type="button" aria-label="Layer Styling"><Icon size={16}>{icons.brush}</Icon></button>
          <button type="button" aria-label="Add Group"><Icon size={16}>{icons.group}</Icon></button>
          <button type="button" aria-label="Map Themes"><Icon size={16}>{icons.eye}</Icon></button>
          <button type="button" aria-label="Filter Legend"><Icon size={16}>{icons.filterMenu}</Icon></button>
          <button type="button" aria-label="Filter by Expression" className="flex items-center gap-[6px]">
            <Icon size={16}>{icons.epsilon}</Icon>
            <DownArrow />
          </button>
          <button type="button" aria-label="Expand All"><Icon size={16}>{icons.expand}</Icon></button>
          <button type="button" aria-label="Collapse Layers"><Icon size={16}>{icons.collapse}</Icon></button>
          <button type="button" aria-label="Remove Layer"><Icon size={16}>{icons.removeLayer}</Icon></button>
        </div>
        <ul className="min-h-0 grow overflow-hidden border border-[#b4b4b4] bg-white">
          {layers.map((layer) => (
            <LayerRow key={layer.name} layer={layer} />
          ))}
        </ul>
      </section>
    </aside>
  );
}

// Tree symbol positions inside one 268x236 tile of the forest fill.
const trees = [
  [40, 18], [70, 26], [157, 22], [185, 31], [224, 24], [5, 27], [247, 7], [30, 45], [99, 46], [133, 47], [166, 55], [211, 51],
  [243, 60], [5, 62], [43, 75], [109, 75], [189, 74], [147, 80], [79, 84], [221, 83], [12, 86], [169, 97], [251, 95], [34, 104],
  [113, 103], [206, 110], [79, 116], [147, 120], [233, 119], [5, 120], [49, 126], [178, 130], [116, 133], [21, 144], [85, 144],
  [213, 143], [257, 148], [147, 153], [179, 157], [52, 162], [112, 163], [8, 174], [76, 177], [140, 180], [206, 174], [240, 172],
  [40, 186], [171, 188], [105, 199], [15, 204], [223, 202], [78, 206], [193, 210], [155, 211], [254, 208], [45, 223], [115, 222],
  [6, 228], [220, 228], [180, 230],
];

const smallRoads = [
  "M1705 200L1697 255 1666 303 1628 343 1589 368 1569 397 1549 403 1528 425 1472 407 1401 357 1378 350",
  "M1697 255L1719 247 1765 258 1827 294Q1845 304 1860 299L1908 285 1920 284",
  "M1444 388L1432 403 1447 420 1477 442 1515 448 1602 485",
  "M1587 392L1590 443 1651 480",
  "M1684 1046L1666 1016Q1662 1008 1668 1003L1703 983Q1720 978 1745 981L1811 1003Q1822 1007 1834 1003L1876 995Q1890 988 1894 978L1908 957 1920 945",
];
const mainRoad = "M1200 200L1216 233 1255 260 1309 290 1344 308 1406 335 1472 364 1559 400 1630 432 1666 450 1788 588 1827 612 1920 637";
const yellowRoad = "M380 447L457 419 496 401 541 391 648 376 895 342 962 334Q985 327 994 319L1011 304 1021 281 1029 218 1037 200";

// Wide lines carry two parallel tracks, narrow ones a single track.
const rails = [
  { d: "M380 281L635 247 788 223 985 204", width: 8, tracks: [-2, 2] },
  { d: "M380 325L553 331 941 329 1033 326", width: 5, tracks: [0] },
  { d: "M380 342L600 335 800 333", width: 4, tracks: [0] },
  { d: "M380 350L686 344 1033 335", width: 6, tracks: [0] },
  { d: "M1033 335L1176 331", width: 3, tracks: [0] },
  { d: "M1174 327L1299 318 1350 312 1421 303 1538 278 1676 245 1763 215 1790 202", width: 12, tracks: [-3, 3] },
];

const placeNames: [string, number, number, number][] = [
  ["杭深线", 499, 258, -8],
  ["杭温高速线", 637, 338, -1],
  ["杭温联络线", 576, 348, -1],
  ["线", 394, 358, 0],
  ["杭温高速线", 1104, 326, -1],
  ["杭温高速铁路", 1104, 341, -1],
  ["杭温高速线", 1386, 305, -8],
  ["杭温高速线", 1659, 237, -16],
];

function MapCanvas() {
  return (
    <svg viewBox="388 165 1528 878" preserveAspectRatio="xMinYMin slice" className="absolute inset-0 h-full w-full" fill="none" role="img" aria-label="Map canvas">
      <defs>
        <pattern id="forest" x="900" y="600" width="268" height="236" patternUnits="userSpaceOnUse">
          <rect width="268" height="236" fill="#e2eedd" />
          {trees.map(([x, y], i) => (
            <g key={i} transform={`translate(${x} ${y})${i % 3 === 0 ? " scale(-1 1)" : ""}`} stroke="#d1e0cc" strokeWidth=".8">
              <ellipse cx="-2.500" cy="-1.500" rx="2" ry="3" />
              <path d="M-2.500 1v4M2.500-4l2.300 6.500H.3zM2.500 2.500V6" />
            </g>
          ))}
        </pattern>
      </defs>
      <rect x="380" y="160" width="1545" height="890" fill="#faf9f7" />
      <path d="M380 164H830L791 206 768 212 707 217 669 233 560 234 456 248 421 255 380 257z" fill="url(#forest)" />
      <path
        d="M380 672L404 640 434 448 538 413 655 387 910 355 1011 359 1018 323 1042 217 1045 160H1152L1153 206 1158 259 1178 293 1217 317 1242 333 1240 389 1309 395 1356 473 1452 482 1551 506 1636 511 1703 536 1765 600 1765 654 1925 655V1050H380z"
        fill="url(#forest)"
      />
      <g strokeLinejoin="round" strokeLinecap="round">
        {smallRoads.map((d) => (
          <path key={d} d={d} stroke="#efeeed" strokeWidth="11" />
        ))}
        <path d={mainRoad} stroke="#e4e4e3" strokeWidth="16" />
        {smallRoads.map((d) => (
          <path key={d} d={d} stroke="#fff" strokeWidth="9" />
        ))}
        <path d={mainRoad} stroke="#fff" strokeWidth="14" />
        <path d={yellowRoad} stroke="#dfe1bd" strokeWidth="17" />
        <path d={yellowRoad} stroke="#fcfee6" strokeWidth="15" />
      </g>
      <path d="M725 327L832 315Q880 303 911 288" stroke="#dedede" strokeWidth="1.5" strokeDasharray="14 2" />
      {rails.map(({ d, width, tracks }) => (
        <g key={d}>
          <path d={d} stroke="#c6c6c6" strokeWidth={width + 1} />
          <path d={d} stroke="#e8e8e8" strokeWidth={width - 1} />
          {tracks.length > 1 && <path d={d} stroke="#cdcdcd" />}
          {tracks.map((dy) => (
            <path key={dy} d={d} transform={`translate(0 ${dy})`} stroke="#cbcbcb" strokeWidth="2" strokeDasharray="9 7" />
          ))}
        </g>
      ))}
      <g fill="#c6c6c6" stroke="#f6f6f4" strokeWidth="2" paintOrder="stroke" fontSize="11" textAnchor="middle" className="font-['Noto_Sans_CJK_SC',sans-serif]">
        {placeNames.map(([name, x, y, angle], i) => (
          <text key={i} x={x} y={y} transform={`rotate(${angle} ${x} ${y})`}>
            {name}
          </text>
        ))}
      </g>
      <path d="M962 1039L1098 945 1656 631" stroke="#d3dccf" />
      <path
        d="M959.5 1036.5h5v5h-5zM1095.5 942.5h5v5h-5zM1653.5 628.5h5v5h-5zM1095.5 428.5h5v5h-5z"
        fill="#ece9ef"
        stroke="#d0cbd3"
      />
      <path d="M380 344L946 329 1032 327 1173 323" stroke="#ff0" strokeWidth="3.5" />
      <path d="M942 325l8 8m0-8l-8 8M1028 323l8 8m0-8l-8 8M1169 319l8 8m0-8l-8 8" stroke="#f03818" strokeWidth="1.3" />
    </svg>
  );
}

function MapView() {
  return (
    <main className="relative min-w-0 grow overflow-hidden border border-[#b4b4b4]">
      <MapCanvas />
      <div role="status" className="relative flex h-[41px] items-center justify-between border-b border-[#8b9c86] bg-[#ddefd8] pl-2 pr-[22px]">
        <Icon size={18}>
          <path d="M1 8l6 6L21 4 9 22z" fill="#2ad82a" stroke="#118a11" />
        </Icon>
        <button type="button" aria-label="Close message">
          <svg width="18" height="18" viewBox="0 0 18 18" aria-hidden="true">
            <circle cx="9" cy="9" r="8.5" fill="#353b35" />
            <path d="M5.5 5.5l7 7M12.5 5.5l-7 7" stroke="#fff" strokeWidth="3" />
          </svg>
        </button>
      </div>
    </main>
  );
}

function Spinner({ label, value }: { label: string; value: string }) {
  return (
    <>
      <label htmlFor={label}>{label}</label>
      <span className="flex h-[26px] w-[93px] overflow-hidden rounded-[3px] border border-[#a8a8a8] bg-white">
        <input id={label} defaultValue={value} className="w-[77px] pl-1 outline-none" />
        <span className="flex w-[14px] flex-col border-l border-[#c4c4c4]">
          <button type="button" aria-label={`Increase ${label}`} className="flex flex-1 rotate-180 items-center justify-center"><DownArrow /></button>
          <button type="button" aria-label={`Decrease ${label}`} className="flex flex-1 items-center justify-center"><DownArrow /></button>
        </span>
      </span>
    </>
  );
}

function StatusBar() {
  return (
    <footer className="flex h-9 shrink-0 items-center justify-between pb-[2px] pl-[7px] pr-[9px] text-xs text-[#222]">
      <div className="flex items-center gap-2">
        <label className="flex h-[27px] w-[268px] items-center gap-2 rounded-[3px] border border-[#a8a8a8] bg-white pl-2">
          <svg width="13" height="13" viewBox="0 0 13 13" fill="none" stroke="#8a8a8a" strokeWidth="1.3" aria-hidden="true">
            <circle cx="5" cy="5" r="4" />
            <path d="M8 8l4.500 4.500" />
          </svg>
          <input aria-label="Locate" placeholder="Type to locate (Ctrl+K)" className="w-full text-sm outline-none placeholder:text-[#8b8b8b]" />
        </label>
        <span>Permanently join multiple lines (removes lines used for joining)</span>
      </div>
      <div className="flex items-center gap-1">
        <label htmlFor="coordinate">Coordinate</label>
        <input id="coordinate" defaultValue="28.07327°, 120.71312°" className="h-6 w-[140px] rounded-[3px] border border-[#a8a8a8] bg-white text-center outline-none" />
        <button type="button" aria-label="Toggle extents" className="px-1">
          <Icon size={16}>
            <ellipse cx="7" cy="7" rx="3.500" ry="7" transform="rotate(-25 7 7)" fill="#555" stroke="#222" strokeWidth="1.500" />
            <ellipse cx="14" cy="6" rx="3" ry="6" transform="rotate(-15 14 6)" fill="#ddd" stroke="#222" strokeWidth="1.500" />
            <path d="M2 12l7 8M10 11l9 9" stroke="#222" strokeWidth="3" />
            <circle cx="15" cy="18" r="4.500" fill="#eee" stroke="#222" strokeWidth="1.500" />
            <path d="M13 17h1M17 17h1M19 8l4-4M20 12l3-1" stroke="#222" strokeWidth="1.500" />
          </Icon>
        </button>
        <label htmlFor="scale">Scale</label>
        <span className="relative mr-2 flex h-[27px] w-[98px] items-center rounded-[3px] border border-[#a8a8a8] bg-white">
          <select id="scale" defaultValue="1:2952" className="h-full w-full appearance-none pl-[3px] outline-none">
            <option>1:2952</option>
          </select>
          <span className="pointer-events-none absolute inset-y-0 right-0 flex w-5 items-center justify-center border-l border-[#c4c4c4]"><DownArrow /></span>
        </span>
        <button type="button" aria-label="Lock scale" className="mr-1">
          <svg width="14" height="16" viewBox="0 0 14 16" fill="none" aria-hidden="true">
            <path d="M3.5 8V4.5a3.5 3.5 0 017 0V8" stroke="#888" strokeWidth="1.5" />
            <rect x="1" y="7" width="12" height="8" rx="1" fill="#555" />
          </svg>
        </button>
        <Spinner label="Magnifier" value="100%" />
        <span className="w-1" />
        <Spinner label="Rotation" value="0.0 °" />
        <label className="ml-1 flex items-center gap-[5px]">
          <CheckBox label="Render" checked />
          Render
        </label>
        <button type="button" className="ml-3 flex items-center gap-1">
          <svg width="14" height="14" viewBox="0 0 14 14" fill="#999" stroke="#555" aria-hidden="true">
            <circle cx="7" cy="7" r="6" />
            <path d="M1 7h12M7 1c-4 4-4 8 0 12M7 1c4 4 4 8 0 12" fill="none" />
          </svg>
          EPSG:4326
        </button>
        <button type="button" aria-label="Messages" className="ml-5">
          <svg width="17" height="17" viewBox="0 0 17 17" aria-hidden="true">
            <path d="M8 1c10 0 10 13 2 13.5L12 17c-3 0-4-1-5-2.5C-2 14-2 1 8 1z" fill="#555" />
            <path d="M3.5 7h2v2h-2zM7.5 7h2v2h-2zM11.5 7h2v2h-2z" fill="#fff" />
          </svg>
        </button>
      </div>
    </footer>
  );
}

const dockApps: { name: string; running?: boolean; art: ReactNode }[] = [
  {
    name: "Firefox",
    running: true,
    art: (
      <g>
        <path d="M31 1c3 3 6 6 7 12 3 1 7 5 7 14 0 12-9 21-21 21S3 39 3 27c0-6 2-10 5-13 0-2 1-4 2-5 1 2 2 4 5 5 3-1 6 0 8 2 1-5 4-11 8-15z" fill="#ff6a2b" />
        <path d="M31 1c3 3 6 6 7 12 3 2 7 6 7 14 0 8-5 15-11 18 4-8 4-16 0-22-4-7-8-12-3-22z" fill="#ffd83b" />
        <path d="M3 30c2 11 10 18 21 18 7 0 12-3 16-7-8 4-22 5-28-3-3-4-4-9-2-14-5 1-7 3-7 6z" fill="#f1256b" />
        <circle cx="24" cy="26" r="9.5" fill="#7a3fe0" />
        <path d="M8 16c3 1 6 1 8 2 4-1 8 0 11 3-4 1-5 4-9 4-3 0-5 2-5 5-4-5-5-9-5-14z" fill="#ff9d20" />
      </g>
    ),
  },
  {
    name: "Thunderbird",
    art: (
      <g>
        <path d="M3 12c-4 14-2 22 4 28 8 9 24 10 33 1 7-7 9-18 6-28-1-6-5-9-9-10l8-2c-10-3-20-1-24 7-6 3-10 7-11 13C8 19 6 16 3 12z" fill="#1a73d6" />
        <path d="M22 8c4-8 14-10 23-7l-8 2c5 2 9 7 8 13-6-8-14-10-23-8z" fill="#4fa3f4" />
        <ellipse cx="24" cy="25" rx="11" ry="10" fill="#e6eefa" />
        <path d="M14 21l10 9 10-9" fill="none" stroke="#8fb4e4" strokeWidth="1.5" />
        <path d="M3 12c-3 14 4 25 16 28 12 2 20-4 24-12-1 12-9 19-19 19S-4 36 3 12z" fill="#145bb8" />
        <circle cx="25" cy="9" r="1.5" fill="#fff" />
      </g>
    ),
  },
  {
    name: "Files",
    running: true,
    art: (
      <g>
        <path d="M3 6h15l3 4h22v20H3z" fill="#9c2c4b" />
        <rect x="2" y="12" width="44" height="32" rx="4" fill="#9a9a9a" />
        <path d="M2 16c0-3 1-4 4-4h36c3 0 4 1 4 4v8H2z" fill="#aeaeae" />
        <rect x="18" y="20" width="12" height="3" rx="1" fill="#fff" />
        <circle cx="40" cy="8.5" r="11.5" fill="#149c2a" />
      </g>
    ),
  },
  {
    name: "Rhythmbox",
    art: (
      <g>
        <rect x="6" y="2" width="36" height="44" rx="4" fill="#e4dfd3" />
        <circle cx="24" cy="24" r="16" fill="#2e3038" />
        <circle cx="24" cy="24" r="12.5" fill="#f2bd12" />
        <circle cx="24" cy="24" r="5.5" fill="#1f1f1f" />
      </g>
    ),
  },
  {
    name: "LibreOffice Writer",
    art: (
      <g>
        <path d="M10 2h20l12 12v28c0 3-1 4-4 4H10c-3 0-4-1-4-4V6c0-3 1-4 4-4z" fill="#1878b4" />
        <path d="M6 24h36v18c0 3-1 4-4 4H10c-3 0-4-1-4-4z" fill="#3b9bd0" />
        <path d="M33 2h9v9z" fill="#3f8fc2" />
        <path d="M12 19h8M12 23h8M12 27h8M12 31h24M12 35h24M12 39h18" stroke="#fff" strokeWidth="2" />
        <rect x="22.5" y="18.5" width="13" height="9" fill="#3b9bd0" stroke="#fff" strokeWidth="1.5" />
        <path d="M23 27l4-4 3 2 3-3 3 5z" fill="#fff" />
      </g>
    ),
  },
  {
    name: "LibreOffice Calc",
    art: (
      <g>
        <path d="M10 2h20l12 12v28c0 3-1 4-4 4H10c-3 0-4-1-4-4V6c0-3 1-4 4-4z" fill="#157f10" />
        <path d="M6 24h36v18c0 3-1 4-4 4H10c-3 0-4-1-4-4z" fill="#33a127" />
        <path d="M33 2h9v9z" fill="#2c9122" />
        <path d="M14 19h20v20H14zM14 23h20M14 27h20M14 31h20M14 35h20M21 19v20M28 19v20" stroke="#fff" strokeWidth="1.3" fill="none" />
        <rect x="27" y="30" width="9" height="9" fill="#2c8a22" stroke="#fff" />
        <path d="M29.5 38v-3M32 38v-6M34.5 38v-4" stroke="#fff" strokeWidth="1.3" />
      </g>
    ),
  },
  {
    name: "App Center",
    art: (
      <g>
        <path d="M9 3h30l3 39c0 2-1 3-3 3H9c-2 0-3-1-3-3z" fill="#f2592a" />
        <path d="M6 30h35l1 12c0 2-1 3-3 3H9c-2 0-3-1-3-3z" fill="#f47a4a" />
        <path d="M15 5c1 12 17 12 18 0" stroke="#fff" strokeWidth="2" fill="none" />
        <path d="M14 42l8-22h4l8 22M12 34h24" stroke="#fff" strokeWidth="4" fill="none" />
      </g>
    ),
  },
  {
    name: "Terminal",
    running: true,
    art: (
      <g>
        <rect x="2" y="6" width="44" height="36" rx="4" fill="#4c4c4c" stroke="#666" />
        <path d="M8 11l6 3.500L8 18" stroke="#fff" strokeWidth="2" fill="none" />
        <path d="M15 20h8" stroke="#fff" strokeWidth="2" />
      </g>
    ),
  },
];

const dockMore: typeof dockApps = [
  {
    name: "Settings",
    running: true,
    art: (
      <g>
        <rect x="2" y="2" width="44" height="44" rx="4" fill="#929292" stroke="#b5b5b5" />
        <circle cx="24" cy="24" r="10.5" stroke="#fff" strokeWidth="4" fill="none" />
        <circle cx="24" cy="24" r="13.3" stroke="#fff" strokeWidth="3.5" strokeDasharray="3 3.96" fill="none" />
      </g>
    ),
  },
  {
    name: "Text Editor",
    running: true,
    art: (
      <g>
        <rect x="6" y="2" width="36" height="44" rx="4" fill="#f2f2f0" />
        <path d="M6 12V6c0-3 1-4 4-4h28c3 0 4 1 4 4v6z" fill="#3b82dd" />
        <path d="M10 17h18M10 21h15M10 25h14M10 29h10M10 33h8M24 37h14" stroke="#c3bdb2" strokeWidth="1.8" />
        <path d="M15 39l3-8L40 8l6 6-22 22z" fill="#f8bd22" />
        <path d="M40 8l6 6-2 2-6-6z" fill="#ddd" />
        <path d="M40 8c3-3 8 1 6 6z" fill="#ec5c68" stroke="#ec5c68" />
        <path d="M15 39l3-8 5 5z" fill="#e9d6a8" />
      </g>
    ),
  },
  {
    name: "LibreOffice Draw",
    running: true,
    art: (
      <g>
        <path d="M10 2h20l12 12v28c0 3-1 4-4 4H10c-3 0-4-1-4-4V6c0-3 1-4 4-4z" fill="#d68a1c" />
        <path d="M6 24h36v18c0 3-1 4-4 4H10c-3 0-4-1-4-4z" fill="#efa92d" />
        <path d="M33 2h9v9z" fill="#b97a1f" />
        <g stroke="#fff" strokeWidth="1.5" fill="none">
          <circle cx="19" cy="25" r="7" />
          <rect x="25" y="22" width="11" height="11" />
          <path d="M21 28l7 10H15z" fill="#e59d20" />
        </g>
      </g>
    ),
  },
  {
    name: "Disk",
    art: (
      <g>
        <rect x="6" y="2" width="36" height="44" rx="4" fill="#b1b1b1" />
        <path d="M34 20a12 12 0 11-7-5" stroke="#808080" strokeWidth="2" fill="none" />
        <circle cx="24" cy="27" r="3.5" stroke="#808080" strokeWidth="2" fill="none" />
      </g>
    ),
  },
  {
    name: "Trash",
    art: (
      <g>
        <rect x="6" y="2" width="36" height="44" rx="4" fill="#c3c3c3" />
        <rect x="9" y="4" width="30" height="6" rx="3" fill="#777" />
        <path d="M19 26l3-5h4l2 4M30 28l2 5-2 3h-4M22 36h-4l-2-3 2-4" fill="none" stroke="#1f8c28" strokeWidth="4" />
      </g>
    ),
  },
];

function DockItem({ app }: { app: (typeof dockApps)[number] }) {
  return (
    <button type="button" aria-label={app.name} className="relative flex h-16 w-full shrink-0 items-center justify-center">
      {app.running && <span className="absolute left-[3px] h-[5px] w-[5px] rounded-full bg-[#dd4814]" />}
      <svg width="48" height="48" viewBox="0 0 48 48" className="overflow-visible" aria-hidden="true">
        {app.art}
      </svg>
      {app.name === "Files" && <span className="absolute right-[7px] top-[6px] w-[20px] text-center text-sm text-white">1</span>}
    </button>
  );
}

function Dock() {
  return (
    <nav
      aria-label="Dock"
      className="flex w-[66px] shrink-0 flex-col overflow-hidden bg-[#1a1f1c] bg-[radial-gradient(circle_at_70%_44%,#2f3b2a_0,transparent_8%),radial-gradient(circle_at_10%_12%,#2a302c_0,transparent_20%),radial-gradient(circle_at_90%_74%,#333a35_0,transparent_12%),radial-gradient(circle_at_40%_86%,#2b312d_0,transparent_18%)] pt-1"
    >
      {dockApps.map((app) => (
        <DockItem key={app.name} app={app} />
      ))}
      <span className="mx-[9px] mb-px mt-px h-px shrink-0 bg-[#565b58]" />
      <button type="button" aria-label="QGIS" className="relative mx-[3px] my-[2px] flex h-[60px] shrink-0 items-center justify-center rounded-[10px] bg-[#454946]">
        <span className="absolute left-0 h-[5px] w-[5px] rounded-full bg-[#dd4814]" />
        <QgisLogo size={46} />
      </button>
      {dockMore.map((app) => (
        <DockItem key={app.name} app={app} />
      ))}
      <button type="button" aria-label="Show Apps" className="mt-auto flex h-[70px] shrink-0 items-center justify-center">
        <svg width="38" height="38" viewBox="0 0 38 38" fill="none" aria-hidden="true">
          <circle cx="20" cy="19" r="14.5" stroke="#fff" strokeWidth="4" />
          <g fill="#fff" stroke="#1f2421" strokeWidth="2">
            <circle cx="6" cy="18" r="6" />
            <circle cx="27" cy="7" r="6" />
            <circle cx="26" cy="31" r="6" />
          </g>
        </svg>
      </button>
    </nav>
  );
}

function TopBar() {
  return (
    <header className="grid h-8 shrink-0 grid-cols-3 items-center bg-[#131313] text-[15px] text-[#f0f0f0]">
      <div className="flex items-center gap-[6px] pl-[15px]">
        <span className="h-2 w-[29px] rounded-full bg-[#f2f2f2]" />
        <span className="h-[6px] w-[6px] rounded-full bg-[#828282]" />
      </div>
      <time className="pl-[66px] text-center">2月11日 22：40</time>
      <div className="flex items-center justify-end pr-[17px]">
        <svg width="14" height="14" viewBox="0 0 14 14" fill="none" className="mr-[34px]" aria-hidden="true">
          <circle cx="7" cy="7" r="7" fill="#5bb526" />
          <path d="M3 7l3 3 5-5.500" stroke="#fff" strokeWidth="2" />
        </svg>
        <span className="mr-[33px] text-sm">中</span>
        <svg width="16" height="14" viewBox="0 0 16 14" fill="#f2f2f2" className="mr-[14px]" aria-hidden="true">
          <rect x="5.5" width="5" height="4" rx="1" />
          <rect y="9" width="5" height="4.5" rx="1" />
          <rect x="11" y="9" width="5" height="4.5" rx="1" />
          <path d="M8 4v3M2.5 9V7h11v2" fill="none" stroke="#f2f2f2" />
        </svg>
        <svg width="14" height="14" viewBox="0 0 14 14" fill="#f2f2f2" className="mr-[14px]" aria-hidden="true">
          <path d="M13 1c-1-1-2 0-3 1L8.5 3.5 2 2 1 3l5 3-2.5 2.5L1 8l-1 1 3 2 2 3 1-1-.5-2.5L8 8l3 5 1-1-1.500-6.500L12 4c1-1 2-2 1-3z" />
        </svg>
        <svg width="16" height="14" viewBox="0 0 16 14" fill="#f2f2f2" className="mr-3" aria-hidden="true">
          <path d="M0 4.5h3L7 .5v13l-4-4H0z" />
          <path d="M9.5 4.5c1 2 1 3 0 5M12 2.500c2 3 2 6 0 9" fill="none" stroke="#888" />
        </svg>
        <svg width="14" height="14" viewBox="0 0 14 14" fill="none" stroke="#ddd" strokeWidth="1.3" aria-hidden="true">
          <path d="M4 1.8a6 6 0 106 0M7 0v7" />
        </svg>
      </div>
    </header>
  );
}

function TitleBar() {
  return (
    <div className="grid h-[30px] shrink-0 grid-cols-3 items-center text-sm">
      <span className="pl-2 pt-px"><QgisLogo size={21} /></span>
      <h1 className="text-center text-[#b5b5b5]">*Untitled Project — QGIS</h1>
      <div className="flex justify-end gap-[11px] pr-[11px] text-[#c0c0c0]">
        <button type="button" aria-label="Minimize">
          <svg width="12" height="12" viewBox="0 0 12 12" aria-hidden="true"><path d="M1 10h10" stroke="currentColor" strokeWidth="2" /></svg>
        </button>
        <button type="button" aria-label="Restore">
          <svg width="12" height="12" viewBox="0 0 12 12" fill="none" stroke="currentColor" aria-hidden="true"><path d="M.5 4h8v6h-8zM3 4V2h8.500v6H9" /></svg>
        </button>
        <button type="button" aria-label="Close">
          <svg width="12" height="12" viewBox="0 0 12 12" aria-hidden="true"><path d="M1 1l10 10M11 1L1 11" stroke="currentColor" strokeWidth="2" /></svg>
        </button>
      </div>
    </div>
  );
}

export default function App() {
  return (
    <div className="flex h-screen flex-col overflow-hidden bg-[#131313] font-['Ubuntu','Noto_Sans','Noto_Sans_CJK_SC',sans-serif] text-[15px] text-[#1a1a1a]">
      <TopBar />
      <div className="flex min-h-0 grow">
        <Dock />
        <div className="flex min-w-0 grow flex-col bg-[#efefef]">
          <TitleBar />
          <div className="px-[3px]">
            <MenuBar />
            <Toolbar tools={mainTools} label="Project and navigation" />
            <Toolbar tools={editTools} label="Layers and editing" />
          </div>
          <div className="flex min-h-0 grow gap-[6px] px-[3px]">
            <SidePanels />
            <MapView />
          </div>
          <StatusBar />
        </div>
      </div>
    </div>
  );
}
